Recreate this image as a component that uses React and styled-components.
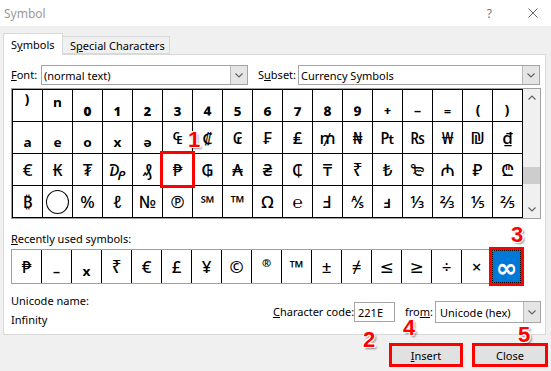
import React from 'react';
import styled, { createGlobalStyle, css } from 'styled-components';

const Global = createGlobalStyle`
  html, body { margin: 0; padding: 0; background: #f0f0f0; }
  body {
    width: 551px; height: 371px; overflow: hidden;
    font-family: "Noto Sans", "DejaVu Sans", sans-serif;
  }
  * { box-sizing: border-box; }
`;

const Dialog = styled.div`
  position: relative;
  width: 551px;
  height: 371px;
  background: #f0f0f0;
  display: flex;
  flex-direction: column;
  font-size: 11px;
  color: #000;
`;

const TitleBar = styled.div`
  height: 26px;
  background: #fff;
  display: flex;
  align-items: center;
  padding: 0 13px 0 4px;
`;

const Title = styled.div`
  flex: 1;
  color: #9a9a9a;
  font-size: 12px;
`;

const Help = styled.span`
  color: #777;
  font-size: 12px;
  margin-right: 36px;
`;

const TabRow = styled.div`
  display: flex;
  align-items: flex-start;
  margin-top: 7px;
  padding-left: 3px;
  position: relative;
  z-index: 1;
`;

const Tab = styled.div`
  display: flex;
  align-items: center;
  padding-left: 7px;
  width: ${p => p.$w}px;
  height: ${p => (p.$active ? 22 : 18)}px;
  margin-top: ${p => (p.$active ? 0 : 3)}px;
  margin-bottom: -1px;
  background: ${p => (p.$active ? '#fff' : '#f0f0f0')};
  border: 1px solid #d9d9d9;
  border-bottom: ${p => (p.$active ? 'none' : '1px solid #d9d9d9')};
  border-left: ${p => (p.$active ? '1px solid #d9d9d9' : 'none')};
`;

const U = styled.span`
  text-decoration: underline;
  text-underline-offset: 1px;
`;

const Panel = styled.div`
  margin-left: 3px;
  width: 543px;
  height: 281px;
  background: #fff;
  border: 1px solid #d9d9d9;
  padding: 10px 4px 0 7px;
  display: flex;
  flex-direction: column;
`;

const FieldRow = styled.div`
  display: flex;
  align-items: center;
  height: 20px;
`;

const Label = styled.div`
  width: ${p => p.$w}px;
  margin-left: ${p => p.$ml || 0}px;
  white-space: nowrap;
  line-height: 12px;
`;

const Combo = styled.div`
  display: flex;
  width: ${p => p.$w}px;
  height: ${p => p.$h || 20}px;
  border: 1px solid #a5a5a5;
  background: #fff;
`;

const ComboValue = styled.div`
  flex: 1;
  display: flex;
  align-items: center;
  padding-left: ${p => p.$pl || 2}px;
  white-space: nowrap;
  overflow: hidden;
`;

const ComboButton = styled.div`
  width: 17px;
  display: flex;
  align-items: center;
  justify-content: center;
  background: #e5e5e5;
  border-left: 1px solid #b9b9b9;
`;

const Chevron = ({ up }) => (
  <svg width="8" height="5" viewBox="0 0 8 5">
    <path
      d={up ? 'M0.5 4.5 L4 1 L7.5 4.5' : 'M0.5 0.5 L4 4 L7.5 0.5'}
      fill="none"
      stroke="#606060"
      strokeWidth="1.1"
    />
  </svg>
);

const GridFrame = styled.div`
  margin-top: 3px;
  display: flex;
  width: 530px;
  border: 1px solid #a0a0a0;
`;

const CharTable = styled.div`
  display: grid;
  grid-template-columns: repeat(17, 29px);
  grid-auto-rows: 31px;
  gap: 1px;
  background: #000;
  border: 1px solid #000;
`;

const kinds = {
  sub: css`
    font-size: 21px;
    font-weight: 700;
  `,
  sup: css`
    align-items: flex-start;
    padding-top: 7px;
    font-size: 11px;
    font-weight: 700;
  `,
  mark: css`
    font-size: 18px;
    font-weight: 700;
  `,
  plain: css`
    font-size: 17px;
    font-weight: 500;
  `,
};

const Cell = styled.div`
  position: relative;
  background: ${p => (p.$selected ? '#0078d7' : '#fff')};
  color: ${p => (p.$selected ? '#fff' : '#000')};
  display: flex;
  align-items: center;
  justify-content: center;
  font-family: "Noto Sans", "DejaVu Sans", sans-serif;
  line-height: 1;
  ${p => kinds[p.$kind || 'plain']}
  ${p => p.$selected && css`font-size: 26px; font-weight: 700;`}
  z-index: ${p => (p.$marked ? 2 : 0)};
  outline: ${p => (p.$marked ? '3px solid #f00' : 'none')};
  &::after {
    content: '';
    display: ${p => (p.$selected ? 'block' : 'none')};
    position: absolute;
    inset: 0;
    border: 1px dotted #000;
  }
`;

const Circle = styled.span`
  width: 23px;
  height: 24px;
  border: 1px solid #000;
  border-radius: 50%;
`;

const ScrollBar = styled.div`
  width: 17px;
  background: #f0f0f0;
  display: flex;
  flex-direction: column;
`;

const ScrollArrow = styled.div`
  height: 17px;
  display: flex;
  align-items: center;
  justify-content: center;
`;

const ScrollTrack = styled.div`
  flex: 1;
  display: flex;
  flex-direction: column;
`;

const Thumb = styled.div`
  height: 17px;
  background: #cdcdcd;
`;

const SectionLabel = styled.div`
  margin-top: 12px;
  line-height: 16px;
`;

const RecentRow = styled.div`
  margin-top: 2px;
  display: grid;
  grid-template-columns: repeat(17, 29px);
  grid-auto-rows: 33px;
  gap: 1px;
  width: 511px;
  background: #000;
  border: 1px solid #a0a0a0;
`;

const InfoRow = styled.div`
  display: flex;
  align-items: flex-start;
`;

const InfoColumn = styled.div`
  display: flex;
  flex-direction: column;
  padding-top: 9px;
  line-height: 16px;
  gap: 3px;
`;

const CodeGroup = styled.div`
  margin-left: auto;
  margin-top: 17px;
  display: flex;
  align-items: center;
  height: 22px;
`;

const TextInput = styled.div`
  width: 41px;
  height: 20px;
  border: 1px solid #a5a5a5;
  background: #fff;
  display: flex;
  align-items: center;
  padding-left: 3px;
`;

const ButtonRow = styled.div`
  display: flex;
  justify-content: flex-end;
  gap: 9px;
  padding-right: 3px;
  margin-top: 8px;
`;

const Highlight = styled.div`
  display: flex;
  width: ${p => p.$w}px;
  height: 24px;
  border: 3px solid #f00;
`;

const Button = styled.div`
  flex: 1;
  display: flex;
  align-items: center;
  justify-content: center;
  background: #e1e1e1;
  font-size: 11px;
`;

const Badge = styled.div`
  position: absolute;
  left: ${p => p.$x}px;
  top: ${p => p.$y}px;
  font-family: "Liberation Sans", Arial, sans-serif;
  font-weight: 700;
  font-size: 22px;
  line-height: 0.8;
  color: #f00;
  text-shadow:
    -1px -1px 0 #fff, 1px -1px 0 #fff, -1px 1px 0 #fff, 1px 1px 0 #fff,
    0 -1px 0 #fff, 0 1px 0 #fff, -1px 0 0 #fff, 1px 0 0 #fff,
    2px 2px 2px rgba(0, 0, 0, 0.45);
  z-index: 5;
`;

const CIRCLE = 'CIRCLE';
const SUP = new Set(['®']);
const MARK = new Set(['℠', '™']);
const SUB = new Set([
  '⁾', 'ⁿ', '₀', '₁', '₂', '₃', '₄', '₅', '₆', '₇', '₈', '₉', '₊', '₋', '₌', '₍', '₎',
  'ₐ', 'ₑ', 'ₒ', 'ₓ', 'ₔ',
]);
const kindOf = ch =>
  SUP.has(ch) ? 'sup' : SUB.has(ch) ? 'sub' : MARK.has(ch) ? 'mark' : 'plain';

const rows = [
  ['⁾', 'ⁿ', '₀', '₁', '₂', '₃', '₄', '₅', '₆', '₇', '₈', '₉', '₊', '₋', '₌', '₍', '₎'],
  ['ₐ', 'ₑ', 'ₒ', 'ₓ', 'ₔ', '₠', '₡', '₢', '₣', '₤', '₥', '₦', '₧', '₨', '₩', '₪', '₫'],
  ['€', '₭', '₮', '₯', '₰', '₱', '₲', '₳', '₴', '₵', '₸', '₹', '₺', '₻', '₼', '₽', '₾'],
  ['₿', CIRCLE, '%', 'ℓ', '№', '℗', '℠', '™', 'Ω', '℮', 'Ⅎ', '⅍', 'ⅎ', '⅓', '⅔', '⅕', '⅖'],
];

const recent = ['₱', '₋', 'ₓ', '₹', '€', '£', '¥', '©', '®', '™', '±', '≠', '≤', '≥', '÷', '×', '∞'];

export default function App() {
  return (
    <Dialog>
      <Global />
      <TitleBar>
        <Title>Symbol</Title>
        <Help>?</Help>
        <svg width="10" height="10" viewBox="0 0 10 10">
          <path d="M0.5 0.5 L9.5 9.5 M9.5 0.5 L0.5 9.5" stroke="#666" strokeWidth="1" />
        </svg>
      </TitleBar>

      <TabRow>
        <Tab $active $w={60}>
          S<U>y</U>mbols
        </Tab>
        <Tab $w={107}>
          S<U>p</U>ecial Characters
        </Tab>
      </TabRow>

      <Panel>
        <FieldRow>
          <Label $w={30}>
            <U>F</U>ont:
          </Label>
          <Combo $w={207}>
            <ComboValue>(normal text)</ComboValue>
            <ComboButton>
              <Chevron />
            </ComboButton>
          </Combo>
          <Label $w={40} $ml={10}>
            S<U>u</U>bset:
          </Label>
          <Combo $w={242}>
            <ComboValue>Currency Symbols</ComboValue>
            <ComboButton>
              <Chevron />
            </ComboButton>
          </Combo>
        </FieldRow>

        <GridFrame>
          <CharTable>
            {rows.flatMap((row, r) =>
              row.map((ch, c) => (
                <Cell key={`${r}-${c}`} $marked={r === 2 && c === 5} $kind={kindOf(ch)}>
                  {ch === CIRCLE ? <Circle /> : ch}
                </Cell>
              ))
            )}
          </CharTable>
          <ScrollBar>
            <ScrollArrow>
              <Chevron up />
            </ScrollArrow>
            <ScrollTrack>
              <Thumb style={{ marginTop: 61 }} />
            </ScrollTrack>
            <ScrollArrow>
              <Chevron />
            </ScrollArrow>
          </ScrollBar>
        </GridFrame>

        <SectionLabel>
          <U>R</U>ecently used symbols:
        </SectionLabel>
        <RecentRow>
          {recent.map((ch, i) => {
            const last = i === recent.length - 1;
            return (
              <Cell key={i} $selected={last} $marked={last} $kind={kindOf(ch)}>
                {ch}
              </Cell>
            );
          })}
        </RecentRow>

        <InfoRow>
          <InfoColumn>
            <div>Unicode name:</div>
            <div>Infinity</div>
          </InfoColumn>
          <CodeGroup>
            <Label $w={81}>
              <U>C</U>haracter code:
            </Label>
            <TextInput>221E</TextInput>
            <Label $w={30} $ml={10}>
              fro<U>m</U>:
            </Label>
            <Combo $w={106} $h={22}>
              <ComboValue $pl={4}>Unicode (hex)</ComboValue>
              <ComboButton>
                <Chevron />
              </ComboButton>
            </Combo>
          </CodeGroup>
        </InfoRow>
      </Panel>

      <ButtonRow>
        <Highlight $w={74}>
          <Button>
            <U>I</U>nsert
          </Button>
        </Highlight>
        <Highlight $w={76}>
          <Button>Close</Button>
        </Highlight>
      </ButtonRow>

      <Badge $x={188} $y={131}>1</Badge>
      <Badge $x={363} $y={331}>2</Badge>
      <Badge $x={511} $y={226}>3</Badge>
      <Badge $x={403} $y={319}>4</Badge>
      <Badge $x={518} $y={326}>5</Badge>
    </Dialog>
  );
}
